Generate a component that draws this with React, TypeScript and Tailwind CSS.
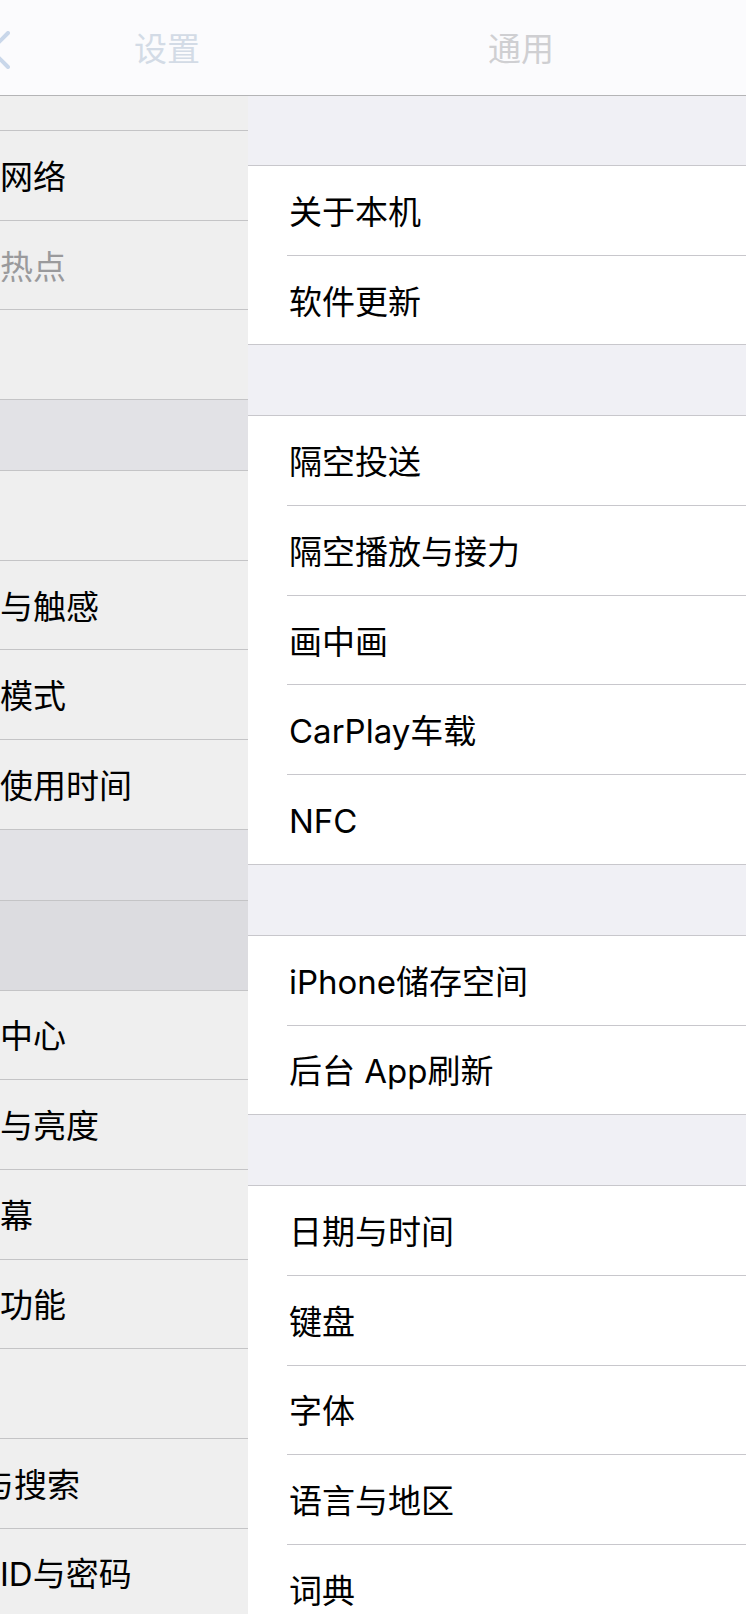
import React from 'react';

type Row = { label: string; gray?: boolean; selected?: boolean; shift?: string } | 'gap';

// left column (master list, shifted off-screen to the left)
const LEFT: Row[] = [
  { label: '蜂窝网络' },
  { label: '个人热点', gray: true },
  { label: 'VPN', shift: 'ml-[-72px]' },
  'gap',
  { label: '通知' },
  { label: '声音与触感' },
  { label: '勿扰模式' },
  { label: '屏幕使用时间' },
  'gap',
  { label: '通用', selected: true },
  { label: '控制中心' },
  { label: '显示与亮度' },
  { label: '主屏幕' },
  { label: '辅助功能' },
  { label: '墙纸' },
  { label: 'Siri与搜索', shift: 'ml-[-69px]' },
  { label: '面容ID与密码' },
];

const GROUPS: string[][] = [
  ['关于本机', '软件更新'],
  ['隔空投送', '隔空播放与接力', '画中画', 'CarPlay车载', 'NFC'],
  ['iPhone储存空间', '后台 App刷新'],
  ['日期与时间', '键盘', '字体', '语言与地区', '词典'],
];

export default function App() {
  return (
    <div className="w-[746px] h-[1614px] overflow-hidden bg-[#f0f0f5] font-['Inter','Noto_Sans_CJK_SC',sans-serif] text-[33px] leading-none text-black flex flex-col">

      {/* Nav bar */}
      <header className="relative h-[96px] shrink-0 bg-[#fbfbfd] border-b border-[#b4b4b6] flex items-center">
        <svg className="absolute left-0 top-[31px]" width="10" height="38" viewBox="0 0 10 38" fill="none">
          <path d="M8 2 L-9 19 L8 36" stroke="#c9d7ea" strokeWidth="4" strokeLinecap="round" strokeLinejoin="round" />
        </svg>
        <div className="w-[248px] shrink-0 pl-[134px] pt-[4px] text-[#d3dbe6]">设置</div>
        <div className="pl-[240px] pt-[4px] text-[#cfcfd2]">通用</div>
      </header>

      <div className="flex flex-1 min-h-0">

        {/* Master list */}
        <aside className="w-[248px] shrink-0 bg-[#efefef] overflow-hidden">
          <div className="h-[35px] border-b border-[#c4c4c6]" />
          {LEFT.map((r, i) =>
            r === 'gap' ? (
              <div key={i} className="h-[71px] bg-[#e2e2e6] border-b border-[#c4c4c6]" />
            ) : (
              <div key={i}
                className={`h-[89.7px] border-b border-[#c4c4c6] flex items-center pt-[4px] overflow-hidden ${r.selected ? 'bg-[#dcdce0]' : ''}`}>
                <span className={`${r.shift ?? 'ml-[-66px]'} whitespace-nowrap ${r.gray ? 'text-[#9a9a9c]' : 'text-black'}`}>
                  {r.label}
                </span>
              </div>
            )
          )}
        </aside>

        {/* Detail list */}
        <main className="flex-1 overflow-hidden">
          {GROUPS.map((g, gi) => (
            <div key={gi}>
              <div className={`${gi === 0 ? 'h-[70px]' : 'h-[71px]'} border-b border-[#c8c7cc]`} />
              <div className="bg-white">
                {g.map((label, i) => {
                  const last = i === g.length - 1;
                  return (
                    <div key={label} className={`h-[89.7px] pl-[39px] ${last ? 'border-b border-[#c8c7cc]' : ''}`}>
                      <div className={`h-full flex items-center pl-[2px] pt-[4px] ${last ? '' : 'border-b border-[#c8c7cc]'}`}>
                        <span className="whitespace-nowrap">{label}</span>
                      </div>
                    </div>
                  );
                })}
              </div>
            </div>
          ))}
        </main>
      </div>
    </div>
  );
}
